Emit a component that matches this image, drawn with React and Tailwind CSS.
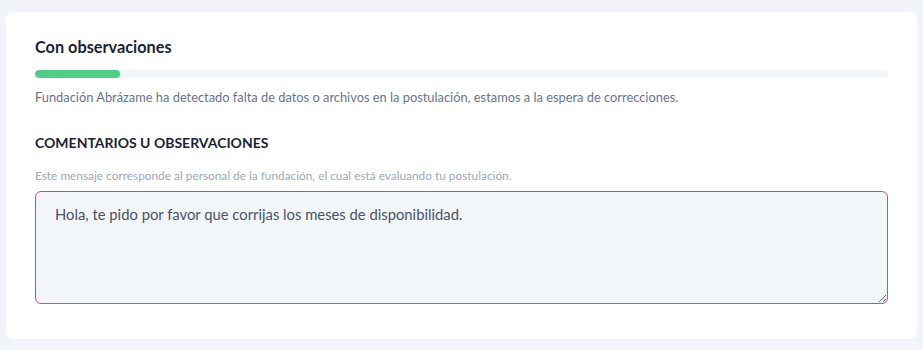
import React from 'react';

const App = () => {
  return (
    <div className="w-[923px] h-[350px] bg-[#f1f4f8] pt-3 px-[6px] font-['Lato',sans-serif]">
      <div className="bg-white rounded-lg h-[327px] px-[29px] pt-[26px]">
        <h2 className="text-[16.3px] font-bold text-[#1a1f36] leading-5 -mt-px">Con observaciones</h2>
        <div className="mt-[13px] h-2 w-full bg-[#f3f6f9] rounded-full overflow-hidden">
          <div className="h-full w-[85px] bg-[#4fce88] rounded-full" />
        </div>
        <p className="mt-[11px] text-[12.85px] text-[#69748c] leading-4">
          Fundación Abrázame ha detectado falta de datos o archivos en la postulación, estamos a la espera de correcciones.
        </p>
        <h3 className="mt-[30px] text-[14px] font-bold text-[#1a1f36] leading-4">COMENTARIOS U OBSERVACIONES</h3>
        <p className="mt-[17px] text-[11.85px] text-[#a0a7b8] leading-4">
          Este mensaje corresponde al personal de la fundación, el cual está evaluando tu postulación.
        </p>
        <textarea
          className="mt-[7px] block w-full h-[113px] bg-[#f3f6f9] border border-[#e0456e] rounded-md px-[19px] py-[11px] text-[14.8px] text-[#4a5266] outline-none font-['Lato',sans-serif]"
          defaultValue="Hola, te pido por favor que corrijas los meses de disponibilidad."
        />
      </div>
    </div>
  );
};

export default App;
